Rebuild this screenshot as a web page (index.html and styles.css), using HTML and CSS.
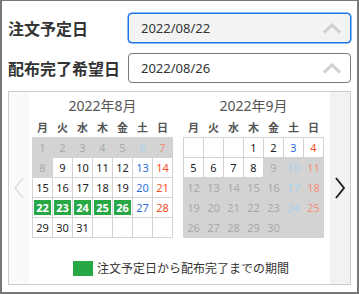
FILE: index.html
```html
<!DOCTYPE html>
<html lang="ja">
<head>
  <meta charset="UTF-8">
  <title>配布期間</title>
  <link rel="stylesheet" href="styles.css">
</head>
<body>
<div class="frame">
  <div class="field">
    <label class="label">注文予定日</label>
    <div class="date-input focused">
      <span>2022/08/22</span>
      <svg class="chev" width="20" height="11" viewBox="0 0 20 11"><polyline points="2,9.5 10,2 18,9.5"/></svg>
    </div>
  </div>
  <div class="field">
    <label class="label">配布完了希望日</label>
    <div class="date-input">
      <span>2022/08/26</span>
      <svg class="chev" width="20" height="11" viewBox="0 0 20 11"><polyline points="2,9.5 10,2 18,9.5"/></svg>
    </div>
  </div>

  <div class="picker">
    <div class="nav prev">
      <svg width="10" height="22" viewBox="0 0 10 22"><polyline points="9,1 1,11 9,21"/></svg>
    </div>
    <div class="picker-body">
      <div class="months">
        <div class="month">
          <div class="month-title">2022年8月</div>
          <table class="cal">
            <thead>
              <tr><th>月</th><th>火</th><th>水</th><th>木</th><th>金</th><th>土</th><th>日</th></tr>
            </thead>
            <tbody>
              <tr><td class="off">1</td><td class="off">2</td><td class="off">3</td><td class="off">4</td><td class="off">5</td><td class="off sat">6</td><td class="off sun">7</td></tr>
              <tr><td class="off">8</td><td>9</td><td>10</td><td>11</td><td>12</td><td class="sat">13</td><td class="sun">14</td></tr>
              <tr><td>15</td><td>16</td><td>17</td><td>18</td><td>19</td><td class="sat">20</td><td class="sun">21</td></tr>
              <tr><td><span class="sel">22</span></td><td><span class="sel">23</span></td><td><span class="sel">24</span></td><td><span class="sel">25</span></td><td><span class="sel">26</span></td><td class="sat">27</td><td class="sun">28</td></tr>
              <tr><td>29</td><td>30</td><td>31</td><td></td><td></td><td></td><td></td></tr>
            </tbody>
          </table>
        </div>
        <div class="month">
          <div class="month-title">2022年9月</div>
          <table class="cal">
            <thead>
              <tr><th>月</th><th>火</th><th>水</th><th>木</th><th>金</th><th>土</th><th>日</th></tr>
            </thead>
            <tbody>
              <tr><td></td><td></td><td></td><td>1</td><td>2</td><td class="sat">3</td><td class="sun">4</td></tr>
              <tr><td>5</td><td>6</td><td>7</td><td>8</td><td class="off">9</td><td class="off sat">10</td><td class="off sun">11</td></tr>
              <tr><td class="off">12</td><td class="off">13</td><td class="off">14</td><td class="off">15</td><td class="off">16</td><td class="off sat">17</td><td class="off sun">18</td></tr>
              <tr><td class="off">19</td><td class="off">20</td><td class="off">21</td><td class="off">22</td><td class="off">23</td><td class="off sat">24</td><td class="off sun">25</td></tr>
              <tr><td class="off">26</td><td class="off">27</td><td class="off">28</td><td class="off">29</td><td class="off">30</td><td class="off"></td><td class="off"></td></tr>
            </tbody>
          </table>
        </div>
      </div>
      <div class="legend">
        <span class="legend-box"></span>
        <span>注文予定日から配布完了までの期間</span>
      </div>
    </div>
    <div class="nav next">
      <svg width="10" height="22" viewBox="0 0 10 22"><polyline points="1,1 9,11 1,21"/></svg>
    </div>
  </div>
</div>
</body>
</html>
```

FILE: styles.css
```css
body {
    margin: 0;
    font-family: "Noto Sans", "Noto Sans CJK JP", sans-serif;
    color: #333;
}

.frame {
    width: 359px;
    height: 294px;
    box-sizing: border-box;
    border: 2px solid #777;
    border-top-width: 1px;
    padding: 12px 6px 0;
    background: #fff;
}

.field {
    display: grid;
    grid-template-columns: 120px 1fr;
    align-items: center;
}

.field + .field {
    margin-top: 10px;
}

.label {
    font-size: 16px;
    font-weight: bold;
    color: #333;
}

.date-input {
    height: 30px;
    box-sizing: border-box;
    display: flex;
    align-items: center;
    justify-content: space-between;
    padding: 0 8px 0 12px;
    border: 1px solid #777;
    border-radius: 4px;
    background: #fff;
    font-size: 13px;
    color: #333;
}

.date-input.focused {
    border-color: #1a73e8;
    background: #f3f3f3;
    box-shadow: 0 0 0 0.5px #1a73e8;
}

.chev polyline {
    fill: none;
    stroke: #cfcfcf;
    stroke-width: 3;
}

.picker {
    margin-top: 8px;
    height: 194px;
    box-sizing: border-box;
    border: 1px solid #ccc;
    display: flex;
}

.nav {
    width: 20px;
    display: flex;
    align-items: center;
    justify-content: center;
}

.nav polyline {
    fill: none;
}

.prev {
    background: #fafafa;
}

.prev polyline {
    stroke: #ddd;
    stroke-width: 1.5;
}

.next {
    background: #f2f2f2;
}

.next polyline {
    stroke: #222;
    stroke-width: 2;
}

.picker-body {
    flex: 1;
    padding: 4px 0 0 3px;
}

.months {
    display: flex;
    gap: 10px;
}

.month {
    width: 141px;
}

.month-title {
    height: 20px;
    line-height: 20px;
    text-align: center;
    font-size: 14px;
    color: #555;
}

.cal {
    width: 141px;
    border-collapse: collapse;
    table-layout: fixed;
}

.cal th {
    height: 21px;
    padding: 0;
    font-size: 11px;
    font-weight: bold;
    color: #555;
}

.cal td {
    height: 19px;
    padding: 0;
    border: 1px solid #d3d3d3;
    text-align: center;
    font-size: 11px;
    color: #222;
    background: #fff;
}

.cal td.sat {
    color: #2c6fe0;
}

.cal td.sun {
    color: #f4511e;
}

.cal td.off {
    background: #d3d3d3;
    color: #a9a9a9;
}

.cal td.off.sat {
    color: #a9d2ef;
}

.cal td.off.sun {
    color: #f2917c;
}

.sel {
    display: block;
    margin: 2px 1px;
    height: 15px;
    line-height: 15px;
    background: #28a745;
    color: #fff;
    font-weight: bold;
}

.legend {
    margin-top: 21px;
    display: flex;
    align-items: center;
    justify-content: center;
    font-size: 12px;
    color: #333;
}

.legend-box {
    width: 20px;
    height: 15px;
    margin-right: 4px;
    background: #28a745;
}
```
